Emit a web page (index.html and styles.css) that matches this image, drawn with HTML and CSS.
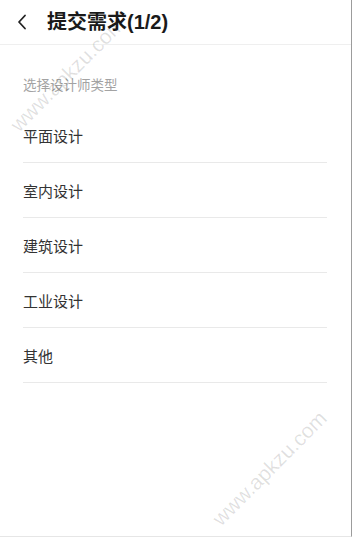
FILE: index.html
```html
<!DOCTYPE html>
<html lang="zh">
<head>
<meta charset="utf-8">
<link rel="stylesheet" href="styles.css">
</head>
<body>
<div class="frame">
  <header class="bar">
    <svg class="back" width="10" height="16" viewBox="0 0 10 16"><polyline points="8,1.5 2,8 8,14.5" fill="none" stroke="#222" stroke-width="1.8" stroke-linecap="round" stroke-linejoin="round"/></svg>
    <h1 class="title">提交需求(1/2)</h1>
  </header>
  <main class="content">
    <p class="label">选择设计师类型</p>
    <ul class="list">
      <li class="item">平面设计</li>
      <li class="item">室内设计</li>
      <li class="item">建筑设计</li>
      <li class="item">工业设计</li>
      <li class="item">其他</li>
    </ul>
  </main>
  <span class="wm wm-top">www.apkzu.com</span>
  <span class="wm wm-bottom">www.apkzu.com</span>
</div>
</body>
</html>
```

FILE: styles.css
```css
* { box-sizing: border-box; }
html, body { margin: 0; padding: 0; background: #fff; }
body { font-family: "Noto Sans CJK SC", "Noto Sans", sans-serif; color: #333; }
.frame {
  position: relative;
  width: 352px;
  height: 537px;
  border-right: 1px solid #9c9c9c;
  border-bottom: 1px solid #e6e6e6;
  overflow: hidden;
}
.bar {
  height: 45px;
  border-bottom: 1px solid #efefef;
  display: flex;
  align-items: center;
  padding-left: 17px;
}
.back { display: block; margin-right: 20px; }
.title {
  margin: 0;
  font-size: 20px;
  font-weight: 700;
  color: #1a1a1a;
  line-height: 1;
  font-family: "Liberation Sans", "Noto Sans CJK SC", sans-serif;
}
.content { padding: 0 24px 0 23px; }
.label {
  margin: 0;
  padding-top: 29px;
  height: 63px;
  font-size: 13.5px;
  line-height: 20px;
  color: #a3a3a3;
}
.list { list-style: none; margin: 0; padding: 0; }
.item {
  height: 55px;
  display: flex;
  align-items: center;
  font-size: 15px;
  color: #333;
  border-bottom: 1px solid #e9e9e9;
}
.wm {
  position: absolute;
  font-family: "Liberation Sans", sans-serif;
  font-size: 21px;
  color: rgba(0,0,0,0.12);
  transform: rotate(-45deg);
  transform-origin: left center;
  white-space: nowrap;
}
.wm-top { left: 14px; top: 116px; }
.wm-bottom { left: 216px; top: 510px; }
```
